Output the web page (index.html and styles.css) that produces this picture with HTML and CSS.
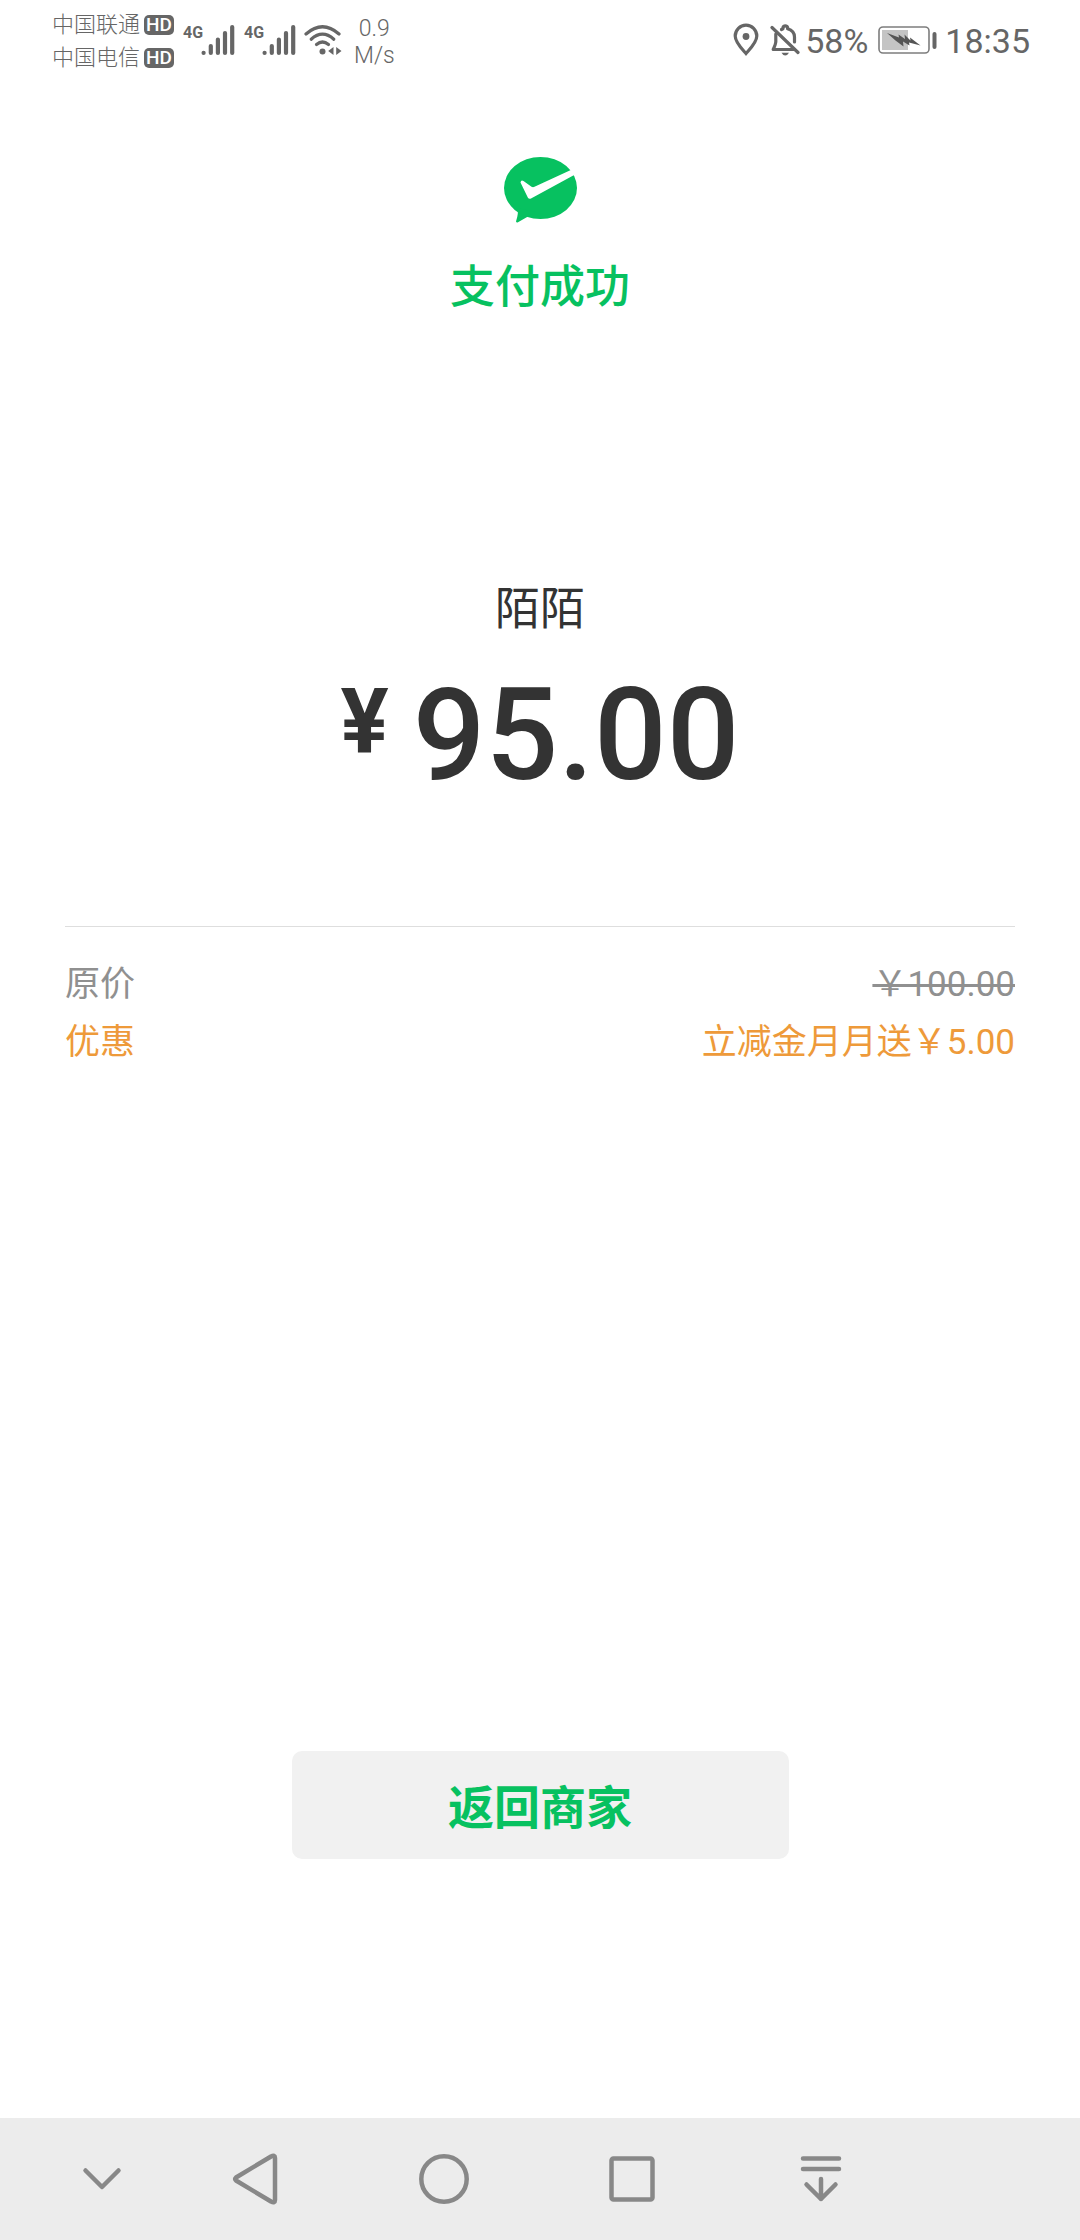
FILE: index.html
```html
<!DOCTYPE html>
<html lang="zh-CN">
<head>
<meta charset="utf-8">
<meta name="viewport" content="width=device-width, initial-scale=1">
<title>支付成功</title>
<link rel="stylesheet" href="styles.css">
</head>
<body>
<header class="status">
  <div class="status-left">
    <div class="carriers">
      <div class="carrier">中国联通<span class="hd">HD</span></div>
      <div class="carrier">中国电信<span class="hd">HD</span></div>
    </div>
    <div class="signal">
      <span class="net">4G</span>
      <svg class="bars" width="34" height="32" viewBox="0 0 34 32" aria-hidden="true"><path d="M2.600 28.800v.2M9.800 22v7M16.900 15.500v13.500M24 9v20M31.200 3v26"/></svg>
    </div>
    <div class="signal">
      <span class="net">4G</span>
      <svg class="bars" width="34" height="32" viewBox="0 0 34 32" aria-hidden="true"><path d="M2.600 28.800v.2M9.800 22v7M16.900 15.500v13.500M24 9v20M31.200 3v26"/></svg>
    </div>
    <svg class="wifi" width="38" height="32" viewBox="0 0 38 32" aria-hidden="true">
      <g fill="none" stroke="#666" stroke-width="3.200" stroke-linecap="round"><path d="M2 10Q18.500-4.500 35 10"/><path d="M7.200 15.200Q18.500 5.200 29.800 15.200"/><path d="M12.500 20.500Q18.500 15.500 24.500 20.500"/></g>
      <circle cx="18.500" cy="27.500" r="3" fill="#666"/><path d="M29.500 23v8l-5.300-4zM32.200 23v8l5.300-4z" fill="#666"/>
    </svg>
    <div class="speed"><span>0.9</span><span>M/s</span></div>
  </div>
  <div class="status-right">
    <svg width="28" height="34" viewBox="0 0 28 34" aria-hidden="true"><path d="M14 30.500C10.500 26.500 3.200 19.500 3.200 13A10.800 10.800 0 0 1 24.800 13C24.800 19.500 17.500 26.500 14 30.500Z" fill="none" stroke="#666" stroke-width="3.200"/><circle cx="14" cy="13.500" r="3.400" fill="#666"/></svg>
    <svg class="bell" width="30" height="34" viewBox="0 0 30 34" aria-hidden="true">
      <g fill="none" stroke="#666" stroke-width="3.200" stroke-linecap="round" stroke-linejoin="round"><path d="M2 4.500L28 29.500"/><path d="M5.800 11V18.500Q5.800 21 3.200 26.500H24"/><path d="M11.500 6.500L13 5.800V4.500A2.400 2.400 0 0 1 17.600 4.500V5.800Q24.500 8 24.500 14V19"/></g>
      <path d="M11.500 29.800H19Q17.500 32.500 15.200 32.500T11.500 29.800Z" fill="#666"/>
    </svg>
    <span class="big">58%</span>
    <svg class="battery" width="60" height="28" viewBox="0 0 60 28" aria-hidden="true"><rect x="1" y="1" width="50" height="26" rx="4" fill="none" stroke="#7d7d7d" stroke-width="1.600"/><rect x="4" y="4" width="26" height="20" fill="#c4c4c4"/><path d="M9 7L21 11.500 20.500 8.500 27 13 26.500 8.500 32.500 14.500 32 11.500 42.500 19.500 31 16.500 31.500 19.500 25 15.500 25.500 20.500 17.500 14.500Z" fill="#555"/><rect x="54.500" y="6" width="4" height="17" rx="2" fill="#666"/></svg>
    <span class="big">18:35</span>
  </div>
</header>

<main class="page">
  <svg class="logo" width="74" height="66" viewBox="0 0 74 66" aria-hidden="true">
    <ellipse cx="37.500" cy="31" rx="36.500" ry="31" fill="#07c160"/>
    <path d="M14.500 51Q15.800 56 13 64.500Q13.500 66 15 65.200L25 59.500L33 55Z" fill="#07c160"/>
    <path d="M17.500 25.500Q18 22.500 20.500 24L28.500 29.800Q30 30.500 31.500 29.800L70 12L73 17L28 41.500Q26 42.500 24.800 40.500Z" fill="#fff"/>
  </svg>
  <h1 class="title">支付成功</h1>
  <p class="merchant">陌陌</p>
  <p class="amount"><span class="yen">¥</span>95.00</p>
  <dl class="details">
    <div class="row"><dt>原价</dt><dd><s>￥100.00</s></dd></div>
    <div class="row promo"><dt>优惠</dt><dd>立减金月月送￥5.00</dd></div>
  </dl>
  <button class="back" type="button">返回商家</button>
</main>

<nav class="nav">
  <button type="button" aria-label="收起"><svg width="52" height="52" viewBox="0 0 52 52"><path d="M9.500 17.500L26 34L42.500 17.500"/></svg></button>
  <button type="button" aria-label="返回"><svg width="52" height="52" viewBox="0 0 52 52"><path d="M6 24.500L41 3.500Q45 1.500 45 5V47Q45 50.500 41 48.500L6 27.500Q4.500 26 6 24.500Z"/></svg></button>
  <button type="button" aria-label="主页"><svg width="52" height="52" viewBox="0 0 52 52"><circle cx="26" cy="26" r="22.700"/></svg></button>
  <button type="button" aria-label="最近任务"><svg width="52" height="52" viewBox="0 0 52 52"><rect x="5.500" y="5.500" width="41" height="41" rx="2"/></svg></button>
  <button type="button" aria-label="下拉通知"><svg width="52" height="52" viewBox="0 0 52 52"><path d="M9 5.500H45M9 16H45M27 26V46M12.500 31.500L27 46L41.500 31.500"/></svg></button>
</nav>
</body>
</html>
```
FILE: styles.css
```css
* {
  box-sizing: border-box;
}

body {
  margin: 0;
  min-height: 100vh;
  display: flex;
  flex-direction: column;
  background: #fff;
  color: #333;
  font-family: Roboto, "Noto Sans CJK SC", sans-serif;
}

svg {
  display: block;
  flex: none;
}

/* status bar */
.status {
  display: flex;
  justify-content: space-between;
  height: 80px;
  padding: 0 50px 0 52px;
  color: #666;
}

.status-left,
.status-right {
  display: flex;
  align-items: center;
}

.carriers {
  display: flex;
  flex-direction: column;
  padding-top: 2px;
}

.carrier {
  display: flex;
  align-items: center;
  gap: 4px;
  font-size: 22px;
  line-height: 33px;
  font-weight: 300;
}

.hd {
  width: 30px;
  height: 20px;
  border-radius: 5px;
  background: #666;
  color: #fff;
  font-size: 19px;
  font-weight: 500;
  line-height: 20px;
  text-align: center;
}

.signal {
  display: flex;
  align-items: flex-start;
  height: 32px;
  margin-left: 9px;
}

.net {
  width: 18px;
  font-size: 16px;
  font-weight: 700;
  line-height: 18px;
}

.bars {
  fill: none;
  stroke: #666;
  stroke-width: 4.200;
  stroke-linecap: round;
}

.wifi {
  margin-left: 8px;
}

.speed {
  display: flex;
  flex-direction: column;
  margin-left: 12px;
  padding-top: 4px;
  font-size: 23px;
  font-weight: 300;
  line-height: 27px;
  text-align: center;
}

.bell {
  margin: 0 5px 0 10px;
}

.big {
  padding-top: 2px;
  font-size: 34px;
}

.battery {
  margin: 0 7px 0 10px;
}

/* payment result */
.page {
  flex: 1;
  display: flex;
  flex-direction: column;
  align-items: center;
  padding: 77px 65px 259px;
}

.title {
  margin: 32px 0 0;
  color: #07c160;
  font-size: 45px;
  font-weight: 500;
  line-height: 66px;
}

.merchant {
  margin: 256px 0 0;
  font-size: 45px;
  line-height: 66px;
}

.amount {
  display: flex;
  align-items: flex-start;
  gap: 24px;
  margin: 16px 0 0;
  font-size: 128px;
  font-weight: 500;
  line-height: 152px;
}

.yen {
  font-size: 90px;
  font-weight: 700;
  line-height: 128px;
}

.details {
  align-self: stretch;
  margin: 115px 0 0;
  padding-top: 29px;
  border-top: 1px solid #dedede;
  font-size: 35px;
  line-height: 58px;
}

.row {
  display: flex;
  justify-content: space-between;
  color: #909090;
}

.promo {
  color: #ee9a3a;
}

.row dd {
  margin: 0;
}

.back {
  width: 497px;
  max-width: 100%;
  height: 108px;
  margin-top: auto;
  padding: 6px 0 0;
  border: 0;
  border-radius: 10px;
  background: #f1f1f1;
  color: #07c160;
  font: 700 46px/66px Roboto, "Noto Sans CJK SC", sans-serif;
}

/* system navigation */
.nav {
  display: grid;
  grid-template-columns: 21fr 60fr repeat(4, 94fr) 83fr;
  height: 122px;
  background: #ececec;
}

.nav button {
  display: flex;
  align-items: center;
  justify-content: center;
  padding: 0;
  border: 0;
  background: none;
}

.nav button:first-child {
  grid-column: 2;
}

.nav svg {
  fill: none;
  stroke: #888;
  stroke-width: 4.500;
  stroke-linecap: round;
  stroke-linejoin: round;
}
```
